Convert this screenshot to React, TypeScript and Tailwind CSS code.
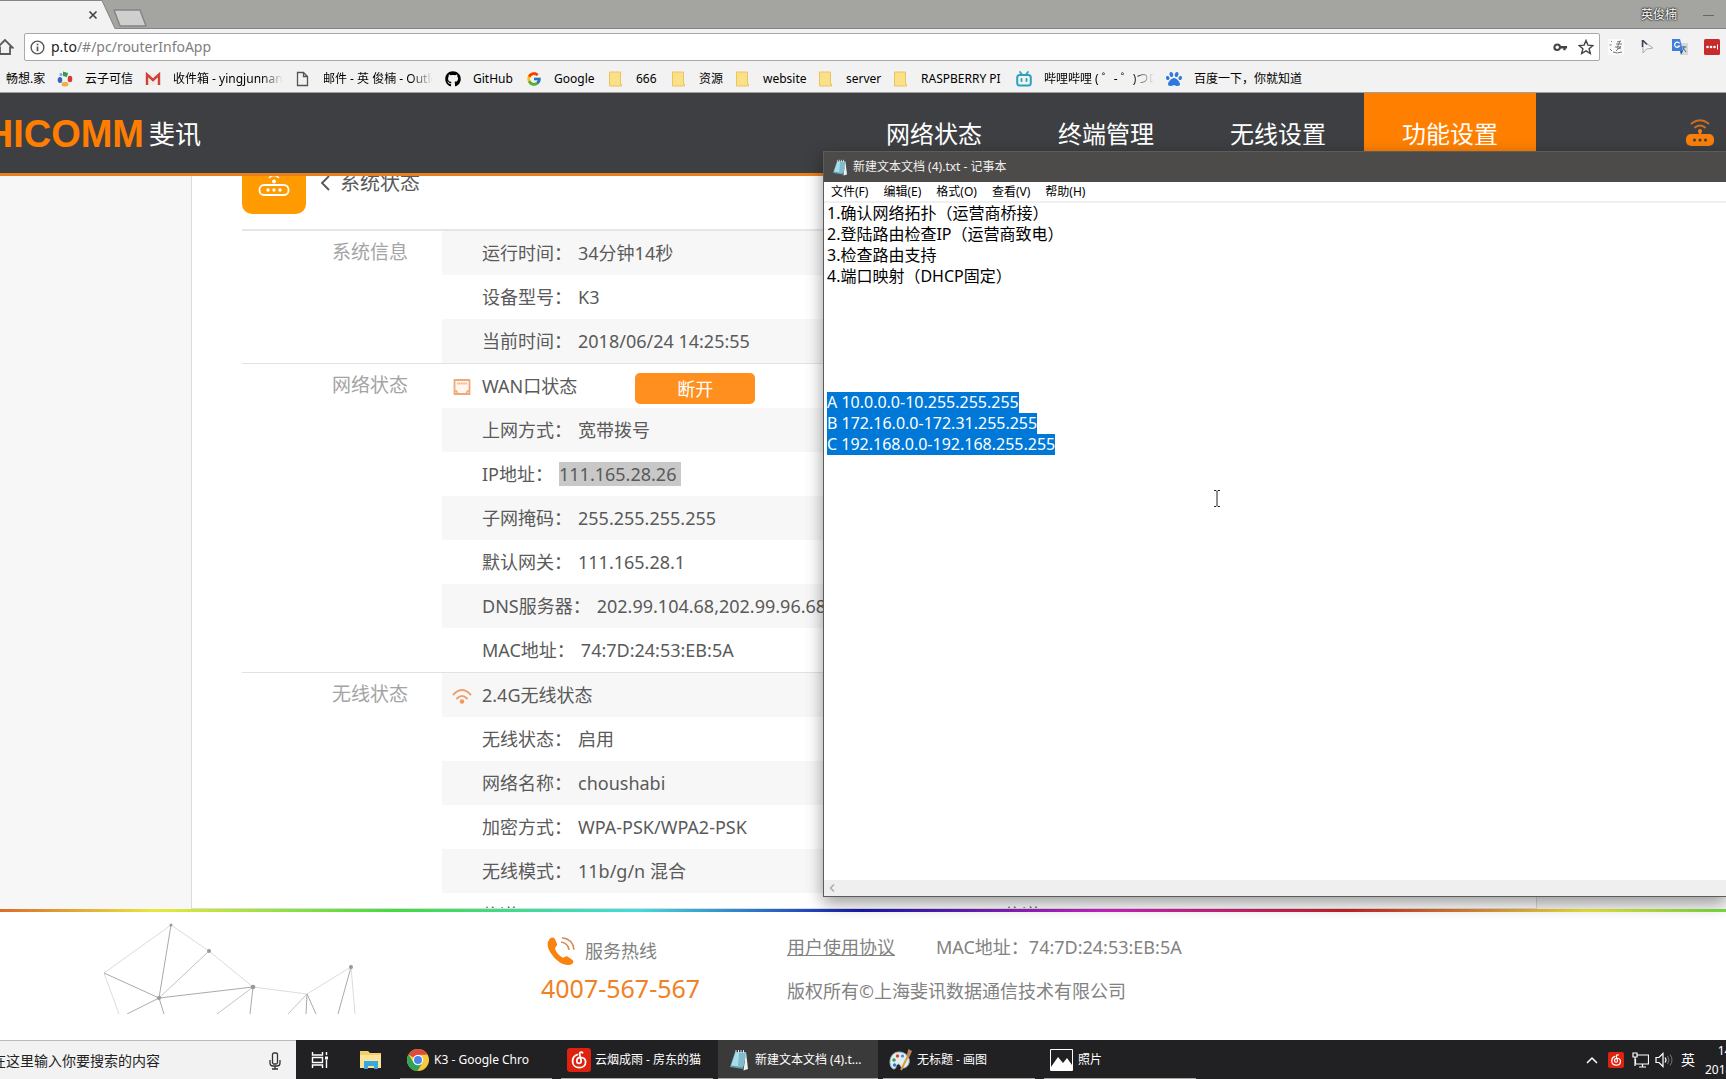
import React from "react";
import { FaGithub, FaPaw } from "react-icons/fa";
import { FcGoogle } from "react-icons/fc";

const sans = "font-['Noto_Sans','Noto_Sans_CJK_SC',sans-serif]";

function Folder() {
  return (
    <svg viewBox="0 0 16 16" className="size-4">
      <path d="M1.500 1h11v12h1v2h-12z" fill="#fbe08a" stroke="#e8c55e" />
    </svg>
  );
}

function NetEase({ className }: { className: string }) {
  return (
    <svg viewBox="0 0 24 24" className={className}>
      <rect width="24" height="24" rx="3" fill="#dd2210" />
      <path
        d="M15.6 4.6c-2-1-3.4.2-2.9 2.2l1.4 5.6c.5 2-.8 3-2.1 3s-2.200-1.100-2.200-2.600c0-2 1.600-3.400 4-3.400 2.800 0 4.800 2 4.800 4.700 0 3.200-2.600 5.600-6.200 5.600-4 0-6.800-2.700-6.800-6.500 0-3.200 2-5.700 4.700-6.600"
        fill="none"
        stroke="#fff"
        strokeWidth="1.800"
        strokeLinecap="round"
      />
    </svg>
  );
}

function NotepadIcon({ className }: { className: string }) {
  return (
    <svg viewBox="0 0 20 22" className={className}>
      <path d="M6 3h11l-3 17-13-2z" fill="#5f9db0" />
      <path d="M6.500 3.500H17l-3 14.500L2 16.500z" fill="#a9dbe8" />
      <path d="M10 3.500h7l-3 14.500-5-.6z" fill="#7fbccd" />
      <path d="M17 3l2 17-4.500 1.500z" fill="#eef2f3" />
      <path d="M7 1v3M9.500 1v3M12 1v3M14.500 1v3" stroke="#dfe6e8" />
    </svg>
  );
}

function PageIcon() {
  return (
    <svg viewBox="0 0 16 16" className="size-4">
      <path d="M2.500 1.500h6l4 4v9h-10zM8.500 1.500v4h4" fill="none" stroke="#555" strokeWidth="1.300" />
    </svg>
  );
}

function Pinwheel() {
  return (
    <svg viewBox="0 0 16 16" className="size-4">
      <path d="M6 0.500l5 1.500-1 4-4-1z" fill="#2f9e4f" />
      <circle cx="4" cy="3.500" r="1.500" fill="#7aa7dc" />
      <ellipse cx="13" cy="8" rx="2.300" ry="3.200" fill="#d43a2e" />
      <ellipse cx="8" cy="13.200" rx="3.400" ry="2.400" fill="#efb04c" />
      <ellipse cx="3" cy="9" rx="2.300" ry="3" fill="#2f67bf" />
    </svg>
  );
}

function Gmail() {
  return (
    <svg viewBox="0 0 16 16" className="size-4">
      <path d="M1 3h14v11H1z" fill="#f3e9e7" />
      <path d="M2 14V3.500L8 9l6-5.500V14" fill="none" stroke="#cf4339" strokeWidth="2.400" />
    </svg>
  );
}

function Bili() {
  return (
    <svg viewBox="0 0 16 16" className="size-4">
      <rect x="1.200" y="4" width="13.600" height="10.500" rx="2.500" fill="none" stroke="#2ba3bd" strokeWidth="2" />
      <path d="M4 1l2 2.500M12 1l-2 2.500M5.500 8v2M10.500 8v2" stroke="#2ba3bd" strokeWidth="1.800" strokeLinecap="round" />
    </svg>
  );
}

const bookmarks: { label: string; icon: React.ReactNode; width: string; fade?: boolean }[] = [
  { label: "云子可信", icon: <Pinwheel />, width: "w-[88px]" },
  { label: "收件箱 - yingjunnan", icon: <Gmail />, width: "w-[150px]", fade: true },
  { label: "邮件 - 英 俊楠 - Outlook", icon: <PageIcon />, width: "w-[150px]", fade: true },
  { label: "GitHub", icon: <FaGithub className="size-4 text-black" />, width: "w-[81px]" },
  { label: "Google", icon: <FcGoogle className="size-4" />, width: "w-[82px]" },
  { label: "666", icon: <Folder />, width: "w-[63px]" },
  { label: "资源", icon: <Folder />, width: "w-[64px]" },
  { label: "website", icon: <Folder />, width: "w-[83px]" },
  { label: "server", icon: <Folder />, width: "w-[75px]" },
  { label: "RASPBERRY PI", icon: <Folder />, width: "w-[123px]" },
  { label: "哔哩哔哩 ( ゜- ゜)つロ", icon: <Bili />, width: "w-[150px]", fade: true },
  { label: "百度一下，你就知道", icon: <FaPaw className="size-4 text-[#2f78e0]" />, width: "w-[150px]" },
];

function Browser() {
  return (
    <div className="shrink-0 bg-[#f2f2f2] text-black">
      <div className="flex h-[29px] items-start justify-between border-b border-[#85858a] bg-[#a4a4a0]">
        <div className="flex">
          <div className="relative h-[29px] w-[116px]">
            <svg viewBox="0 0 116 29" className="absolute inset-0 h-full w-full">
              <path d="M0 1H102L115 29H0z" fill="#f2f2f2" />
              <path d="M0 .5H102L115 28.500" fill="none" stroke="#85858a" />
            </svg>
            <button aria-label="关闭标签页" className="absolute top-[10px] right-[18px]">
              <svg viewBox="0 0 10 10" className="size-[10px]">
                <path d="M1.500 1.500l7 7M8.500 1.500l-7 7" stroke="#444" strokeWidth="1.700" />
              </svg>
            </button>
          </div>
          <button aria-label="新标签页" className="-ml-1 mt-[6px]">
            <svg viewBox="0 0 36 18" className="h-[18px] w-9">
              <path d="M2 1H28L34 17H8z" fill="#cfcfcd" stroke="#85858a" strokeWidth="1.500" strokeLinejoin="round" />
            </svg>
          </button>
        </div>
        <div className="flex items-center gap-[26px] pr-3 pt-[7px]">
          <span className="text-xs leading-4 text-white [text-shadow:0_0_2px_#000,0_0_2px_#000]">英俊楠</span>
          <button aria-label="最小化" className="h-4 w-[11px]">
            <span className="block h-px w-full bg-[#666]" />
          </button>
        </div>
      </div>
      <div className="flex h-[36px] items-center">
        <button aria-label="主页" className="flex w-6 shrink-0 overflow-hidden">
          <svg viewBox="0 0 18 18" className="-ml-1 size-[18px]">
            <path d="M9 2L1.500 9.500H4V16h10V9.500h2.500z" fill="none" stroke="#5a5a5a" strokeWidth="1.800" />
          </svg>
        </button>
        <div className="flex h-[28px] flex-1 items-center rounded-xs border border-[#a9a9a9] bg-white px-[5px]">
          <svg viewBox="0 0 16 16" className="size-[15px] shrink-0">
            <circle cx="8" cy="8" r="6.800" fill="none" stroke="#555" strokeWidth="1.500" />
            <path d="M8 7v5M8 4v1.700" stroke="#555" strokeWidth="1.800" />
          </svg>
          <div className="ml-[6px] flex-1 text-sm leading-5 text-[#808080]">
            <span className="text-[#222]">p.to</span>/#/pc/routerInfoApp
          </div>
          <svg viewBox="0 0 16 16" className="size-[15px]">
            <path d="M7.500 6.500H15V9h-1.500v2H11V9H7.500z" fill="#444" />
            <circle cx="4.500" cy="7.700" r="3" fill="none" stroke="#444" strokeWidth="2.200" />
          </svg>
          <svg viewBox="0 0 16 16" className="ml-[10px] size-4">
            <path d="M8 1.500l1.900 4.600 5 .4-3.800 3.200 1.200 4.800L8 11.900l-4.300 2.600 1.200-4.800L1.100 6.500l5-.4z" fill="none" stroke="#444" strokeWidth="1.400" />
          </svg>
        </div>
        <div className="flex items-center gap-4 pr-[6px] pl-2">
          <svg viewBox="0 0 16 16" className="size-4">
            <rect width="16" height="16" fill="#fafafa" />
            <path d="M3 2l1 1M1.500 6l2 0M2 10l2 2M5 13q4 2 9 0M9 3l4-1M8 5h6M12 2l-3 7M7 8h6M9 10l4-1M8 12l5-5" fill="none" stroke="#777" />
          </svg>
          <svg viewBox="0 0 16 16" className="size-4">
            <path d="M3 2v12l3.500-4L13 9z" fill="#f6f6f6" stroke="#aaa" />
            <path d="M2.500 1v7M3 1.500l4 4" stroke="#4a4358" strokeWidth="1.600" />
          </svg>
          <svg viewBox="0 0 16 16" className="size-4">
            <path d="M7 4h9v12H9z" fill="#d8d8d8" />
            <path d="M0 0h8l3 12H0z" fill="#3f7fdc" />
            <path d="M7.500 4.500A2.600 2.600 0 1 0 7.500 7H5.500" fill="none" stroke="#fff" strokeWidth="1.200" />
            <path d="M9.500 8h5M12 7v1c0 2-1 3-2 4M11 9l3 4" fill="none" stroke="#47699e" />
            <path d="M8 12h3l-2 4z" fill="#2957a8" />
          </svg>
          <svg viewBox="0 0 16 16" className="size-4">
            <rect width="16" height="16" rx="1.500" fill="#c62c2c" />
            <circle cx="3.500" cy="8" r="1.300" fill="#fff" />
            <circle cx="7" cy="8" r="1.300" fill="#fff" />
            <circle cx="10.500" cy="8" r="1.300" fill="#fff" />
            <path d="M13.500 5.500v5" stroke="#fff" />
          </svg>
        </div>
      </div>
      <div className="flex h-[28px] items-center overflow-hidden border-b border-[#a0a0a0] text-xs leading-5 whitespace-nowrap">
        <a href="#" className="w-[57px] shrink-0 pl-[6px]">畅想.家</a>
        {bookmarks.map((b) => (
          <a key={b.label} href="#" className={`flex shrink-0 items-center gap-3 ${b.width}`}>
            <span className="shrink-0">{b.icon}</span>
            <span
              className={
                b.fade
                  ? "w-[110px] overflow-hidden [mask-image:linear-gradient(to_right,#000_80%,transparent)]"
                  : ""
              }
            >
              {b.label}
            </span>
          </a>
        ))}
      </div>
    </div>
  );
}

function SiteHeader() {
  return (
    <header className="flex h-[83px] shrink-0 border-b-[3px] border-[#e8801e] bg-[#3e3f42] text-white">
      <div className="flex flex-1 items-center pt-px">
        <div className="flex w-[144px] justify-end overflow-hidden font-['Liberation_Sans',sans-serif] text-[38px] leading-[40px] font-bold text-[#ff7e00]">
          PHICOMM
        </div>
        <span className="ml-[5px] text-[26px] leading-[40px]">斐讯</span>
      </div>
      <nav className="flex text-2xl">
        {["网络状态", "终端管理", "无线设置"].map((n) => (
          <a key={n} href="#" className="flex w-[172px] items-center justify-center pt-px">
            {n}
          </a>
        ))}
        <a href="#" className="flex w-[172px] items-center justify-center bg-[#ff8000] pt-px">
          功能设置
        </a>
      </nav>
      <div className="flex w-[190px] items-center justify-end pr-3">
        <svg viewBox="0 0 28 28" className="size-7">
          <rect x="0" y="15" width="28" height="12" rx="5" fill="#f97f0a" />
          <path d="M14 16v-4" stroke="#f97f0a" strokeWidth="2.500" />
          <circle cx="14" cy="12" r="2" fill="#f97f0a" />
          <path d="M9 8.500q5-4 10 0M5.500 4.500q8.500-6.500 17 0" fill="none" stroke="#c96e24" strokeWidth="2" strokeLinecap="round" />
          <circle cx="8.500" cy="21" r="1.500" fill="#3e3f42" />
          <circle cx="14" cy="21" r="1.500" fill="#3e3f42" />
          <circle cx="19.500" cy="21" r="1.500" fill="#3e3f42" />
        </svg>
      </div>
    </header>
  );
}

type Row = { label: string; value?: string; kind?: "wan" | "wifi" | "selected"; extra?: string };

const groups: { title: string; rows: Row[]; odd: boolean }[] = [
  {
    title: "系统信息",
    odd: true,
    rows: [
      { label: "运行时间：", value: "34分钟14秒" },
      { label: "设备型号：", value: "K3" },
      { label: "当前时间：", value: "2018/06/24 14:25:55" },
    ],
  },
  {
    title: "网络状态",
    odd: false,
    rows: [
      { label: "WAN口状态", kind: "wan" },
      { label: "上网方式：", value: "宽带拨号" },
      { label: "IP地址：", value: "111.165.28.26", kind: "selected" },
      { label: "子网掩码：", value: "255.255.255.255" },
      { label: "默认网关：", value: "111.165.28.1" },
      { label: "DNS服务器：", value: "202.99.104.68,202.99.96.68" },
      { label: "MAC地址：", value: "74:7D:24:53:EB:5A" },
    ],
  },
  {
    title: "无线状态",
    odd: true,
    rows: [
      { label: "2.4G无线状态", kind: "wifi" },
      { label: "无线状态：", value: "启用" },
      { label: "网络名称：", value: "choushabi" },
      { label: "加密方式：", value: "WPA-PSK/WPA2-PSK" },
      { label: "无线模式：", value: "11b/g/n 混合" },
      { label: "信道：", value: "11", extra: "信道：" },
    ],
  },
];

function WanIcon() {
  return (
    <svg viewBox="0 0 18 16" className="h-4 w-[18px]">
      <path d="M1.500 1h15v14h-15z" fill="#fff6ef" stroke="#f0a878" strokeWidth="1.800" strokeLinejoin="round" />
      <path d="M4 4.500h10" stroke="#f0b48c" strokeWidth="2" strokeDasharray="1.500 .6" />
      <path d="M1.500 12h2l1.500 3M16.500 12h-2l-1.500 3" fill="none" stroke="#f0a878" strokeWidth="1.500" />
    </svg>
  );
}

function WifiIcon() {
  return (
    <svg viewBox="0 0 20 16" className="h-4 w-5">
      <path d="M1.500 6.500q8.500-9 17 0M5 10.500q5-5 10 0" fill="none" stroke="#eda26c" strokeWidth="2" strokeLinecap="round" />
      <circle cx="10" cy="13.500" r="2.200" fill="#ee9a5c" />
    </svg>
  );
}

function InfoRow({ row, shaded }: { row: Row; shaded: boolean }) {
  return (
    <div className={`grid h-11 grid-cols-2 items-center ${shaded ? "bg-[#f7f7f7]" : ""}`}>
      <div className="flex items-center whitespace-nowrap">
        <span className="flex w-10 shrink-0 justify-center pt-[2px]">
          {row.kind === "wan" && <WanIcon />}
          {row.kind === "wifi" && <WifiIcon />}
        </span>
        <dt>{row.label}</dt>
        {row.kind === "wan" && (
          <dd className="ml-[58px] pt-1">
            <button className="block h-[31px] w-[120px] rounded-[5px] bg-[#ff8f1e] text-lg leading-[32px] text-white">
              断开
            </button>
          </dd>
        )}
        {row.value && (
          <dd className="ml-[6px]">
            {row.kind === "selected" ? (
              <span className="inline-block bg-[#c8c8c8] pr-[5px] leading-6">{row.value}</span>
            ) : (
              row.value
            )}
          </dd>
        )}
      </div>
      {row.extra && (
        <div className="flex pl-10">
          <dt>{row.extra}</dt>
          <dd className="ml-[6px]">{row.value}</dd>
        </div>
      )}
    </div>
  );
}

function Main() {
  return (
    <main className="flex min-h-0 flex-1 overflow-hidden bg-[#f7f7f7]">
      <div className="mr-[189px] ml-[191px] h-full flex-1 overflow-hidden border-x border-b border-[#dcdcdc] bg-white px-[50px] text-[#5a5a5a]">
        <div className="flex h-[55px] items-start border-b-2 border-[#e6e6e6]">
          <div className="flex h-[38px] w-16 items-end justify-center rounded-b-[10px] bg-[#ff9b00]">
            <svg viewBox="0 0 32 38" className="h-[38px] w-8">
              <path d="M11 2q5-5 10 0" fill="none" stroke="#fff" strokeWidth="1.500" />
              <circle cx="16" cy="5.500" r="2" fill="#fff" />
              <rect x="1.500" y="9" width="29" height="10" rx="4.500" fill="none" stroke="#fff" strokeWidth="1.800" />
              <circle cx="10" cy="14" r="1.700" fill="#fff" />
              <circle cx="16" cy="14" r="1.700" fill="#fff" />
              <circle cx="22" cy="14" r="1.700" fill="#fff" />
            </svg>
          </div>
          <a href="#" className="-mt-2 ml-[14px] flex items-center gap-[10px] text-xl leading-[30px]">
            <svg viewBox="0 0 10 16" className="h-4 w-[10px]">
              <path d="M9 1L2 8l7 7" fill="none" stroke="#555" strokeWidth="1.800" />
            </svg>
            系统状态
          </a>
        </div>
        {groups.map((g, gi) => (
          <section key={g.title} className={`flex ${gi > 0 ? "border-t border-[#e2e2e2]" : ""}`}>
            <h2 className="w-[200px] shrink-0 pr-[34px] text-right text-[19px] leading-[42px] text-[#a4a4a4]">
              {g.title}
            </h2>
            <dl className="min-w-0 flex-1 text-lg">
              {g.rows.map((r, i) => (
                <InfoRow key={r.label + i} row={r} shaded={(i % 2 === 0) === g.odd} />
              ))}
            </dl>
          </section>
        ))}
      </div>
    </main>
  );
}

function Footer() {
  return (
    <footer className="shrink-0 bg-white">
      <div className="h-[3px] bg-[linear-gradient(to_right,#dc6c2c_0%,#e8e83c_9%,#40dc40_23%,#40dce0_37%,#1818b0_50%,#d020c8_64%,#c82028_78%,#ece83c_92%,#78dc40_100%)]" />
      <div className="flex h-[128px] text-[#828282]">
        <svg viewBox="0 0 260 94" className="mt-2 ml-[100px] h-[94px] w-[260px] shrink-0">
          <g fill="none" stroke="#dcdcdc">
            <path d="M4 53L71 5L109 31L153 67L207 74L251 47M4 53L19 94M251 47L255 94" />
            <path d="M109 31L59 78M207 74L188 94M153 67L117 94" stroke="#c4c4c4" />
            <path d="M71 5L59 78L4 53M59 78L153 67L150 94M59 78L27 94M59 78L64 94M207 74L206 94M207 74L216 94M251 47L238 94" stroke="#aaa" />
          </g>
          <g fill="#999">
            <circle cx="71" cy="5" r="1.500" />
            <circle cx="109" cy="31" r="2" />
            <circle cx="59" cy="78" r="2" />
            <circle cx="153" cy="67" r="2.300" />
            <circle cx="251" cy="47" r="2" />
          </g>
        </svg>
        <div className="ml-[181px] w-[246px] pt-[23px]">
          <div className="flex items-center gap-[10px] pl-[6px] text-lg leading-8">
            <svg viewBox="0 0 28 28" className="size-7">
              <path d="M2 3C4 0 6 0 8 2l2 5c.6 2-2 3-2 4.500 1 4 4 7 7.500 9 1.500.8 3-2 5-1l5 3.500c1.500 1.300.8 3-.5 4C20 30 11 26 6 19 1 13-1 7 2 3z" fill="#f98210" />
              <path d="M14 5q7 1 8 8M15 .8q11 1.200 12 12" fill="none" stroke="#d58a55" strokeWidth="1.500" />
            </svg>
            服务热线
          </div>
          <div className="mt-[3px] text-[25px] leading-9 text-[#f08225]">4007-567-567</div>
        </div>
        <div className="pt-[19px] text-lg leading-8">
          <div className="flex gap-[41px]">
            <a href="#" className="underline">用户使用协议</a>
            <span>MAC地址：74:7D:24:53:EB:5A</span>
          </div>
          <div className="mt-3">版权所有©上海斐讯数据通信技术有限公司</div>
        </div>
      </div>
    </footer>
  );
}

function Notepad() {
  return (
    <section
      aria-label="记事本"
      className="absolute top-[151px] right-0 left-[823px] flex h-[746px] flex-col border border-r-0 border-[#5c5c5a] bg-white text-black shadow-[0_6px_16px_rgba(0,0,0,0.4)]"
    >
      <div className="flex h-[30px] items-center gap-[5px] bg-[#4c4b49] pl-2 text-xs text-[#f0f0f0]">
        <NotepadIcon className="h-[17px] w-4" />
        <span>新建文本文档 (4).txt - 记事本</span>
      </div>
      <div className="flex h-[21px] items-center gap-[15px] border-b-2 border-[#f0f0f0] pl-[7px] text-xs leading-4">
        {["文件(F)", "编辑(E)", "格式(O)", "查看(V)", "帮助(H)"].map((m) => (
          <button key={m}>{m}</button>
        ))}
      </div>
      <div className="flex-1 pl-[3px] text-base leading-[21px]">
        <p>1.确认网络拓扑（运营商桥接）</p>
        <p>2.登陆路由检查IP（运营商致电）</p>
        <p>3.检查路由支持</p>
        <p>4.端口映射（DHCP固定）</p>
        <div className="mt-[105px] text-white">
          <p className="flex h-[21px]"><span className="bg-[#0078d7]">A 10.0.0.0-10.255.255.255</span></p>
          <p className="flex h-[21px]"><span className="bg-[#0078d7]">B 172.16.0.0-172.31.255.255</span></p>
          <p className="flex h-[21px]"><span className="bg-[#0078d7]">C 192.168.0.0-192.168.255.255</span></p>
        </div>
      </div>
      <div className="flex h-4 items-center bg-[#efefef] pl-[5px]">
        <svg viewBox="0 0 6 8" className="h-2 w-[6px]">
          <path d="M5 .5L1.500 4 5 7.500" fill="none" stroke="#b0b0b0" strokeWidth="1.600" />
        </svg>
      </div>
      <svg viewBox="0 0 8 17" className="absolute top-[338px] left-[389px] h-[17px] w-2">
        <path d="M1 .5h2l1 1 1-1h2M1 16.500h2l1-1 1 1h2M4 1.500v14" fill="none" stroke="#222" />
      </svg>
    </section>
  );
}

function TaskButton({ icon, label, className }: { icon: React.ReactNode; label: string; className: string }) {
  return (
    <button className={`flex h-full shrink-0 items-center border-b border-[#a9a9a9] pt-px text-xs whitespace-nowrap ${className}`}>
      {icon}
      <span>{label}</span>
    </button>
  );
}

function Taskbar() {
  return (
    <div className="flex h-[39px] shrink-0 items-center overflow-hidden bg-[#212123] text-white">
      <div className="flex h-full w-[296px] shrink-0 items-center justify-between overflow-hidden border-t border-[#bbb] bg-[#f2f2f2] pt-px pr-[15px] text-[#222]">
        <label className="-ml-2 flex flex-1">
          <input
            aria-label="搜索"
            defaultValue="在这里输入你要搜索的内容"
            className="w-full bg-transparent text-sm leading-5 outline-none"
          />
        </label>
        <svg viewBox="0 0 12 18" className="h-[18px] w-3">
          <rect x="3.500" y="1" width="5" height="11" rx="1.500" fill="none" stroke="#333" strokeWidth="1.300" />
          <path d="M1 8v3q0 3 3 3h4q3 0 3-3V8M6 14v3M3 17h6" fill="none" stroke="#333" strokeWidth="1.300" />
        </svg>
      </div>
      <button aria-label="任务视图" className="ml-[15px] w-[17px]">
        <svg viewBox="0 0 17 16" className="h-4 w-[17px]">
          <path d="M1.500 0v3h10V0M1.500 16v-3h10v3M1.500 5.500h10v5h-10zM15.500 0v3M15.500 8v8" fill="none" stroke="#fff" strokeWidth="1.400" />
          <path d="M14 4.500h3v3h-3z" fill="#fff" />
        </svg>
      </button>
      <button aria-label="文件资源管理器" className="ml-8">
        <svg viewBox="0 0 22 18" className="h-[18px] w-[22px]">
          <path d="M0 0h8l2 2h11v15H0z" fill="#f3cf6b" />
          <path d="M0 4h21v13H0z" fill="#fbe49a" />
          <path d="M4 18v-8h14v8h-4v-3H8v3z" fill="#38a9dc" />
        </svg>
      </button>
      <TaskButton
        className="ml-[18px] w-[152px] gap-[5px] pl-[7px]"
        label="K3 - Google Chro"
        icon={
          <svg viewBox="0 0 22 22" className="size-[22px]">
            <circle cx="11" cy="11" r="11" fill="#f7c93b" />
            <path d="M11 11L1.500 5.500A11 11 0 0 1 20.500 5.500L11 6z" fill="#dd4b3e" />
            <path d="M1.500 5.500A11 11 0 0 0 10.500 22l5-8.500-9 0z" fill="#2fa357" />
            <circle cx="11" cy="11" r="5.200" fill="#fff" />
            <circle cx="11" cy="11" r="4" fill="#4a86e8" />
          </svg>
        }
      />
      <TaskButton className="ml-[9px] w-[152px] gap-1 pl-[6px]" label="云烟成雨 - 房东的猫" icon={<NetEase className="size-6" />} />
      <TaskButton className="ml-[5px] w-40 gap-1 bg-[#3b3a3a] pl-[9px]" label="新建文本文档 (4).t..." icon={<NotepadIcon className="h-[22px] w-6" />} />
      <TaskButton
        className="ml-[5px] w-[152px] gap-1 pl-[6px]"
        label="无标题 - 画图"
        icon={
          <svg viewBox="0 0 24 24" className="size-6">
            <path d="M10 4C4 4 1 9 1 14c0 4 2 7 4 7 3 0 1-4 4-5 3-.5 2 5 6 4 4-1 6-5 5-9-1-4-5-7-10-7z" fill="#e3edf1" stroke="#9bb4c0" />
            <circle cx="5" cy="12" r="1.800" fill="#38a04c" />
            <circle cx="8.500" cy="8" r="1.700" fill="#d8442e" />
            <circle cx="5.500" cy="17" r="1.700" fill="#3478c8" />
            <circle cx="13.500" cy="8" r="1.600" fill="#3f8ad6" />
            <path d="M19 8l-7 14" stroke="#d79a3a" strokeWidth="2" />
            <path d="M17.500 8l2-7 3.500 2-2.500 6z" fill="#b98552" />
          </svg>
        }
      />
      <TaskButton
        className="ml-[9px] w-[152px] gap-[5px] pl-[6px]"
        label="照片"
        icon={
          <svg viewBox="0 0 23 22" className="h-[22px] w-[23px]">
            <path d="M.5 .5h22v21H.5z" fill="#212123" stroke="#fff" />
            <path d="M1 18l7-10 5 6 4-5 5 7v5H1z" fill="#fff" />
          </svg>
        }
      />
      <div className="ml-auto flex h-full shrink-0 items-center">
        <svg viewBox="0 0 12 8" className="h-2 w-3">
          <path d="M1 7l5-5 5 5" fill="none" stroke="#fff" strokeWidth="1.500" />
        </svg>
        <NetEase className="ml-[10px] size-4" />
        <svg viewBox="0 0 17 16" className="ml-2 h-4 w-[17px]">
          <path d="M5 3h11.500v9H3.500V7M7 15h7M10.500 12v3M1 1h4v4H1zM3 5v9" fill="none" stroke="#fff" strokeWidth="1.200" />
        </svg>
        <svg viewBox="0 0 18 16" className="ml-[6px] h-4 w-[18px]">
          <path d="M1 5.500h3l4-4v13l-4-4H1z" fill="none" stroke="#fff" strokeWidth="1.200" />
          <path d="M10 5.500q2 2.500 0 5" fill="none" stroke="#fff" strokeWidth="1.200" />
          <path d="M12.500 4q3 4 0 8M15 2.500q4 5.500 0 11" fill="none" stroke="#777" />
        </svg>
        <span className="ml-2 w-[14px] text-sm">英</span>
        <div className="ml-[10px] w-[21px] overflow-hidden text-xs leading-[19px]">
          <div className="w-[56px] text-center">14:25</div>
          <div className="w-[56px] text-center">2018/6/24</div>
        </div>
      </div>
    </div>
  );
}

export default function App() {
  return (
    <div lang="zh-CN" className={`relative flex h-screen flex-col overflow-hidden bg-white ${sans}`}>
      <Browser />
      <SiteHeader />
      <Main />
      <Footer />
      <Taskbar />
      <Notepad />
    </div>
  );
}
